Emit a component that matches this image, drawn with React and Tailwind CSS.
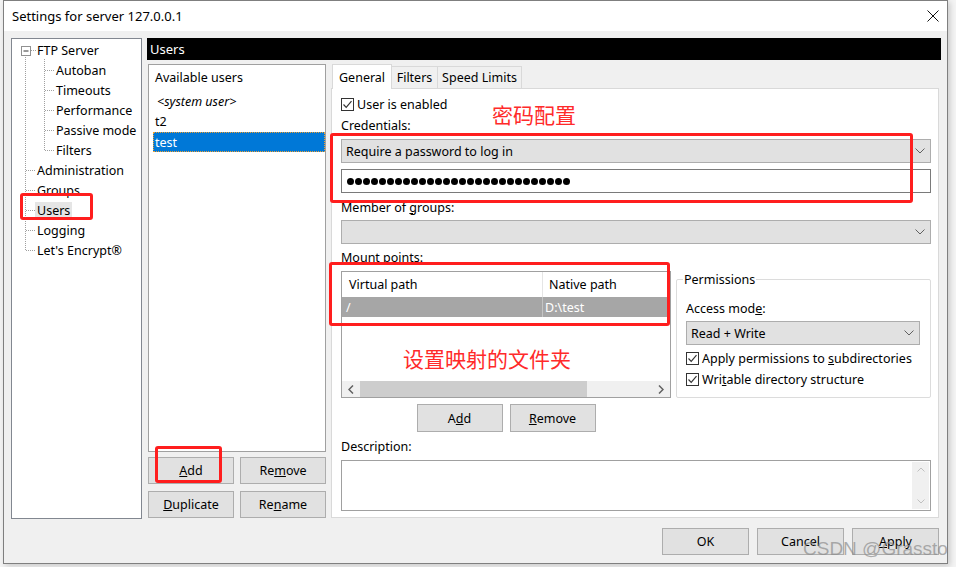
import React from "react";

function T({ children, className = "" }) {
  return <span className={"relative top-[1px] " + className}>{children}</span>;
}

function Btn({ children, className = "" }) {
  return (
    <div className={"flex items-center justify-center bg-[#e1e1e1] border border-[#adadad] text-black " + className}>
      <T>{children}</T>
    </div>
  );
}

function Chevron() {
  return (
    <svg width="10" height="6" viewBox="0 0 10 6">
      <path d="M0.5 0.5 L5 5 L9.5 0.5" stroke="#606060" strokeWidth="1" fill="none" />
    </svg>
  );
}

function Select({ children, className = "" }) {
  return (
    <div className={"h-[24px] bg-[#e1e1e1] border border-[#adadad] flex items-center justify-between pl-[4px] pr-[5px] " + className}>
      <T>{children}</T>
      <Chevron />
    </div>
  );
}

function Check() {
  return (
    <div className="w-[13px] h-[13px] border border-[#333333] bg-white flex items-center justify-center shrink-0">
      <svg width="11" height="11" viewBox="0 0 11 11">
        <path d="M1.5 5.5 L4.2 8.3 L9.5 2.2" stroke="#333333" strokeWidth="1.2" fill="none" />
      </svg>
    </div>
  );
}

function Tree() {
  const top = ["Administration", "Groups", "Users", "Logging", "Let's Encrypt®"];
  const kids = ["Autoban", "Timeouts", "Performance", "Passive mode", "Filters"];
  return (
    <div className="relative w-[131px] h-full border border-[#828790] bg-white">
      <svg className="absolute left-0 top-[1px]" width="129" height="260">
        <g stroke="#a0a0a0" strokeWidth="1" strokeDasharray="1 1" fill="none">
          <path d="M13.5 15 V211" />
          <path d="M19 10.5 H24" />
          {[130, 150, 170, 190, 210].map((y) => (
            <path key={y} d={`M14 ${y + 0.5} H24`} />
          ))}
          <path d="M32.5 19 V111" />
          {[30, 50, 70, 90, 110].map((y) => (
            <path key={y} d={`M33 ${y + 0.5} H43`} />
          ))}
        </g>
        <rect x="9.5" y="6.5" width="9" height="9" fill="white" stroke="#919191" />
        <path d="M11.5 11 H16.5" stroke="#333" strokeWidth="1" />
      </svg>
      <div className="relative flex flex-col pt-[1px]">
        <div className="h-[20px] flex items-center pl-[25px]"><T>FTP Server</T></div>
        {kids.map((k) => (
          <div key={k} className="h-[20px] flex items-center pl-[44px]"><T>{k}</T></div>
        ))}
        {top.map((t) => (
          <div key={t} className="h-[20px] flex items-center pl-[25px]">
            {t === "Users" ? (
              <span className="bg-[#e5e5e5] -ml-[2px] px-[2px] h-[18px] flex items-center relative top-[1px]">Users</span>
            ) : (
              <T>{t}</T>
            )}
          </div>
        ))}
      </div>
    </div>
  );
}

function UsersCol() {
  return (
    <div className="ml-[1px] w-[178px] flex flex-col">
      <div className="h-[388px] border border-[#a0a0a0] bg-white flex flex-col">
        <div className="h-[24px] flex items-center pl-[6px]"><T>Available users</T></div>
        <div className="mt-[2px] h-[20px] flex items-center pl-[8px] italic"><T>&lt;system user&gt;</T></div>
        <div className="h-[20px] flex items-center pl-[6px]"><T>t2</T></div>
        <div className="mt-[1px] ml-[4px] h-[20px] bg-[#0078d7] text-white border border-dotted border-[#f0a030] flex items-center pl-[1px]">
          <T>test</T>
        </div>
      </div>
      <div className="mt-[5px] flex gap-[6px]">
        <Btn className="w-[86px] h-[27px]"><u>A</u>dd</Btn>
        <Btn className="w-[86px] h-[27px]">Re<u>m</u>ove</Btn>
      </div>
      <div className="mt-[7px] flex gap-[6px]">
        <Btn className="w-[86px] h-[27px]"><u>D</u>uplicate</Btn>
        <Btn className="w-[86px] h-[27px]">Re<u>n</u>ame</Btn>
      </div>
    </div>
  );
}

function MountList() {
  return (
    <div className="w-[330px] h-[127px] border border-[#a0a0a0] bg-white flex flex-col">
      <div className="h-[25px] flex">
        <div className="w-[201px] border-r border-[#e5e5e5] pl-[7px] flex items-center"><T>Virtual path</T></div>
        <div className="flex-1 pl-[6px] flex items-center"><T>Native path</T></div>
      </div>
      <div className="h-[20px] flex bg-[#a6a6a6] text-white">
        <div className="w-[201px] border-r border-[#c4c4c4] pl-[4px] flex items-center"><T>/</T></div>
        <div className="flex-1 pl-[2px] flex items-center"><T>D:\test</T></div>
      </div>
      <div className="flex-1" />
      <div className="h-[16px] bg-[#f0f0f0] flex items-center">
        <div className="w-[18px] h-full flex items-center justify-center">
          <svg width="6" height="9" viewBox="0 0 6 9"><path d="M5 0.5 L1 4.5 L5 8.5" stroke="#606060" strokeWidth="1.5" fill="none" /></svg>
        </div>
        <div className="w-[227px] h-full bg-[#cdcdcd]" />
        <div className="flex-1" />
        <div className="w-[18px] h-full flex items-center justify-center">
          <svg width="6" height="9" viewBox="0 0 6 9"><path d="M1 0.5 L5 4.5 L1 8.5" stroke="#606060" strokeWidth="1.5" fill="none" /></svg>
        </div>
      </div>
    </div>
  );
}

function Permissions() {
  return (
    <div className="relative mt-[8px] ml-[5px] w-[255px] h-[119px] border border-[#dcdcdc] rounded-[2px] pl-[9px] flex flex-col">
      <span className="absolute top-[-9px] left-[6px] h-[16px] bg-white px-[1px] flex items-center"><T>Permissions</T></span>
      <div className="mt-[20px] h-[16px] flex items-center">
        <T>Access mod<u>e</u>:</T>
      </div>
      <Select className="mt-[5px] w-[234px]">Read + Write</Select>
      <div className="mt-[5px] h-[16px] flex items-center gap-[3px]">
        <Check />
        <T>Apply permissions to <u>s</u>ubdirectories</T>
      </div>
      <div className="mt-[5px] h-[16px] flex items-center gap-[3px]">
        <Check />
        <T>Wri<u>t</u>able directory structure</T>
      </div>
    </div>
  );
}

function TabsPanel() {
  const dots = Array.from({ length: 28 });
  return (
    <div className="ml-[5px] w-[608px] flex flex-col">
      <div className="h-[24px] flex items-end pl-[1px]">
        <div className="relative z-10 -mb-[1px] w-[60px] h-[25px] bg-white border border-b-0 border-[#d9d9d9] flex items-center pl-[6px]">
          <T>General</T>
        </div>
        <div className="w-[46px] h-[22px] bg-[#f0f0f0] border border-b-0 border-l-0 border-[#d9d9d9] flex items-center justify-center">
          <T>Filters</T>
        </div>
        <div className="w-[84px] h-[22px] bg-[#f0f0f0] border border-b-0 border-l-0 border-[#d9d9d9] flex items-center justify-center">
          <T>Speed Limits</T>
        </div>
      </div>
      <div className="h-[430px] border border-[#d9d9d9] bg-white flex flex-col pl-[9px] pr-[7px]">
        <div className="mt-[7px] h-[16px] flex items-center gap-[3px]">
          <Check />
          <T>User is enabled</T>
        </div>
        <div className="mt-[5px] h-[16px] flex items-center"><T>Credentials:</T></div>
        <Select className="mt-[6px] w-[590px]">Require a password to log in</Select>
        <div className="mt-[6px] w-[590px] h-[24px] border border-[#7a7a7a] bg-white flex items-center pl-[5px] gap-[1px]">
          {dots.map((_, i) => (
            <span key={i} className="w-[7px] h-[7px] rounded-full bg-black" />
          ))}
        </div>
        <div className="mt-[6px] h-[16px] flex items-center">
          <T>Member of <u>g</u>roups:</T>
        </div>
        <Select className="mt-[5px] w-[590px]"></Select>
        <div className="mt-[5px] h-[16px] flex items-center"><T>Mount points:</T></div>
        <div className="mt-[6px] flex items-start">
          <MountList />
          <Permissions />
        </div>
        <div className="mt-[6px] w-[330px] flex justify-center gap-[7px]">
          <Btn className="w-[86px] h-[28px]">A<u>d</u>d</Btn>
          <Btn className="w-[86px] h-[28px]"><u>R</u>emove</Btn>
        </div>
        <div className="mt-[6px] h-[16px] flex items-center"><T>Description:</T></div>
        <div className="mt-[6px] w-[590px] h-[51px] border border-[#a0a0a0] bg-white flex justify-end p-[1px]">
          <div className="w-[17px] h-full bg-[#f0f0f0] flex flex-col items-center justify-between py-[5px]">
            <svg width="8" height="5" viewBox="0 0 8 5"><path d="M0.5 4.5 L4 1 L7.5 4.5" stroke="#c0c0c0" fill="none" /></svg>
            <svg width="8" height="5" viewBox="0 0 8 5"><path d="M0.5 0.5 L4 4 L7.5 0.5" stroke="#c0c0c0" fill="none" /></svg>
          </div>
        </div>
      </div>
    </div>
  );
}

export default function App() {
  return (
    <div className="relative w-[956px] h-[567px] bg-[#f4f4f4] overflow-hidden font-['Noto_Sans','Noto_Sans_CJK_SC',sans-serif] text-[12.5px] leading-none text-black">
      <div className="ml-[3px] w-[945px] h-[564px] border border-[#7f7f7f] flex flex-col shadow-[2px_2px_6px_rgba(0,0,0,0.18)]">
        <div className="h-[30px] bg-white flex items-center justify-between pl-[8px] pr-[8px]">
          <span className="text-[13px]">Settings for server 127.0.0.1</span>
          <svg width="12" height="12" viewBox="0 0 12 12">
            <path d="M0.5 0.5 L11.5 11.5 M11.5 0.5 L0.5 11.5" stroke="#111" strokeWidth="1" />
          </svg>
        </div>
        <div className="flex-1 bg-[#f0f0f0] flex flex-col pt-[7px] pl-[7px]">
          <div className="flex h-[481px]">
            <Tree />
            <div className="ml-[5px] w-[794px] flex flex-col">
              <div className="h-[22px] bg-black text-white pl-[3px] flex items-center text-[13px]">Users</div>
              <div className="mt-[4px] flex flex-1">
                <UsersCol />
                <TabsPanel />
              </div>
            </div>
          </div>
          <div className="mt-[9px] flex justify-end gap-[8px] pr-[8px]">
            <Btn className="w-[87px] h-[27px]">OK</Btn>
            <Btn className="w-[87px] h-[27px]">Cancel</Btn>
            <Btn className="w-[87px] h-[27px]"><u>A</u>pply</Btn>
          </div>
        </div>
      </div>

      {/* annotation overlays */}
      <div className="absolute left-[20px] top-[193px] w-[73px] h-[27px] border-[3px] border-[#ff1e1e] rounded-[3px]" />
      <div className="absolute left-[155px] top-[446px] w-[67px] h-[37px] border-[3px] border-[#ff1e1e] rounded-[3px]" />
      <div className="absolute left-[330px] top-[133px] w-[583px] h-[70px] border-[3px] border-[#ff1e1e] rounded-[3px]" />
      <div className="absolute left-[329px] top-[262px] w-[341px] h-[64px] border-[3px] border-[#ff1e1e] rounded-[3px]" />
      <div className="absolute left-[492px] top-[104px] text-[21px] leading-none text-[#ff2a2a] font-['Noto_Sans_CJK_SC',sans-serif]">密码配置</div>
      <div className="absolute left-[403px] top-[348px] text-[21px] leading-none text-[#ff2a2a] font-['Noto_Sans_CJK_SC',sans-serif]">设置映射的文件夹</div>
      <div className="absolute left-[803px] top-[539px] text-[19px] leading-none text-[#8c8c8c]/70 font-['Liberation_Sans',sans-serif]">CSDN @Grassto</div>
    </div>
  );
}
